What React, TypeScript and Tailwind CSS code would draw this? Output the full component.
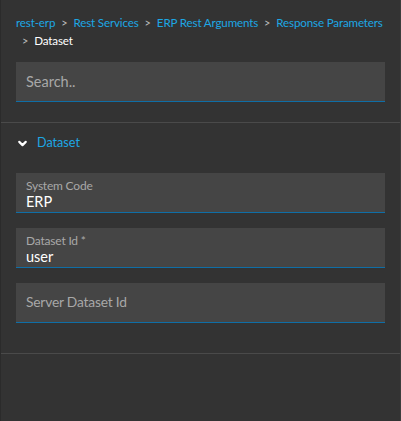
import { ChevronDown } from "lucide-react";

const crumbs = ["rest-erp", "Rest Services", "ERP Rest Arguments", "Response Parameters"];

function Field({ label, value }: { label: string; value?: string }) {
  return (
    <div className="h-10 bg-[#454545] border-b border-[#0f6ea6] px-[10px] flex flex-col justify-center">
      {value ? (
        <div className="pt-[4px] flex flex-col">
          <span className="text-[12px] tracking-[-0.2px] leading-[15px] text-[#a8a8a8]">{label}</span>
          <span className="text-[14.5px] leading-[18px] text-white">{value}</span>
        </div>
      ) : (
        <span className="text-[13.8px] tracking-[-0.2px] text-[#a8a8a8]">{label}</span>
      )}
    </div>
  );
}

function Sep() {
  return <span className="inline-block mx-[6px] text-[#bdbdbd] text-[11px]">&gt;</span>;
}

export default function App() {
  return (
    <div
      className="w-[401px] h-[421px] bg-[#333333] border-l border-[#2b2b2b] border-r border-r-[#3d3d3d]"
      style={{ fontFamily: 'Lato, "Liberation Sans", sans-serif' }}
    >
      <div className="px-[15px] pt-[14px] text-[11.6px] tracking-[-0.15px] leading-[18px]">
        {crumbs.map((c, i) => (
          <span key={c} className="whitespace-nowrap">
            {i > 0 && <Sep />}
            <span className="text-[#1da7e4]">{c}</span>
          </span>
        ))}
        <span className="whitespace-nowrap">
          <Sep />
          <span className="text-white">Dataset</span>
        </span>
      </div>
      <div className="px-[15px] pt-3 pb-5 border-b border-[#4a4a4a]">
        <div className="h-10 bg-[#454545] border-b border-[#0f6ea6] px-[10px] flex items-center">
          <span className="text-[14.5px] text-[#a8a8a8]">Search..</span>
        </div>
      </div>
      <div className="px-[15px] pt-[11px] pb-[30px] border-b border-[#4a4a4a]">
        <div className="flex items-center gap-[8px] h-[18px]">
          <ChevronDown className="w-[13px] h-[13px] text-white" strokeWidth={4} />
          <span className="text-[12.6px] text-[#1da7e4]">Dataset</span>
        </div>
        <div className="mt-[21px] flex flex-col gap-[15px]">
          <Field label="System Code" value="ERP" />
          <Field label="Dataset Id *" value="user" />
          <Field label="Server Dataset Id" />
        </div>
      </div>
    </div>
  );
}
